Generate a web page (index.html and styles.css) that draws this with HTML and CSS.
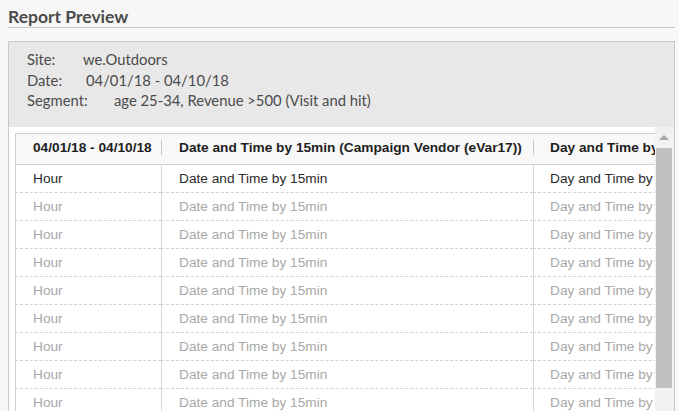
FILE: index.html
```html
<!DOCTYPE html>
<html>
<head>
<meta charset="utf-8">
<link rel="stylesheet" href="styles.css">
</head>
<body>
<div class="page">
  <h1 class="title">Report Preview</h1>
  <div class="box">
    <div class="info">
      <div class="info-row"><span class="lbl lbl-site">Site:</span><span>we.Outdoors</span></div>
      <div class="info-row"><span class="lbl lbl-date">Date:</span><span>04/01/18 - 04/10/18</span></div>
      <div class="info-row"><span class="lbl lbl-seg">Segment:</span><span>age 25-34, Revenue &gt;500 (Visit and hit)</span></div>
    </div>
    <div class="preview">
      <div class="viewport">
        <table class="grid">
          <thead>
            <tr>
              <th class="c1">04/01/18 - 04/10/18</th>
              <th class="c2">Date and Time by 15min (Campaign Vendor (eVar17))</th>
              <th class="c3">Day and Time by 15min</th>
            </tr>
          </thead>
          <tbody>
            <tr class="first"><td class="c1">Hour</td><td class="c2">Date and Time by 15min</td><td class="c3">Day and Time by 15min</td></tr>
            <tr><td class="c1">Hour</td><td class="c2">Date and Time by 15min</td><td class="c3">Day and Time by 15min</td></tr>
            <tr><td class="c1">Hour</td><td class="c2">Date and Time by 15min</td><td class="c3">Day and Time by 15min</td></tr>
            <tr><td class="c1">Hour</td><td class="c2">Date and Time by 15min</td><td class="c3">Day and Time by 15min</td></tr>
            <tr><td class="c1">Hour</td><td class="c2">Date and Time by 15min</td><td class="c3">Day and Time by 15min</td></tr>
            <tr><td class="c1">Hour</td><td class="c2">Date and Time by 15min</td><td class="c3">Day and Time by 15min</td></tr>
            <tr><td class="c1">Hour</td><td class="c2">Date and Time by 15min</td><td class="c3">Day and Time by 15min</td></tr>
            <tr><td class="c1">Hour</td><td class="c2">Date and Time by 15min</td><td class="c3">Day and Time by 15min</td></tr>
            <tr><td class="c1">Hour</td><td class="c2">Date and Time by 15min</td><td class="c3">Day and Time by 15min</td></tr>
            <tr><td class="c1">Hour</td><td class="c2">Date and Time by 15min</td><td class="c3">Day and Time by 15min</td></tr>
          </tbody>
        </table>
      </div>
      <div class="scrollbar">
        <div class="sb-arrow"><span class="tri"></span></div>
        <div class="sb-thumb"></div>
      </div>
    </div>
  </div>
</div>
</body>
</html>
```
FILE: styles.css
```css
html, body {
  margin: 0;
  padding: 0;
}
body {
  background: #f7f7f7;
  width: 679px;
  height: 411px;
  overflow: hidden;
}
.page {
  padding: 7px 4px 0 8px;
  height: 411px;
  box-sizing: border-box;
  display: flex;
  flex-direction: column;
}
.title {
  margin: 0;
  font-family: "Lato", "Open Sans", sans-serif;
  font-weight: 700;
  font-size: 17.5px;
  line-height: 19px;
  color: #4b4b4b;
  padding-bottom: 1px;
  border-bottom: 1px solid #c8c8c8;
}
.box {
  margin-top: 13px;
  border: 1px solid #c9c9c9;
  border-bottom: none;
  background: #e8e8e8;
  flex: 1;
  display: flex;
  flex-direction: column;
  min-height: 0;
}
.info {
  padding: 7px 0 16.5px 18px;
  font-family: "Lato", "Open Sans", sans-serif;
  font-size: 14.8px;
  line-height: 20.5px;
  color: #4b4b4b;
}
.lbl {
  display: inline-block;
}
.lbl-site { width: 56px; }
.lbl-date { width: 59px; }
.lbl-seg { width: 87px; }
.preview {
  flex: 1;
  display: flex;
  min-height: 0;
  background: #ffffff;
}
.viewport {
  flex: 1;
  min-width: 0;
  overflow: hidden;
  padding: 6px 0 0 6px;
}
.grid {
  border-collapse: separate;
  border-spacing: 0;
  table-layout: fixed;
  width: 778px;
  font-family: "Liberation Sans", Arial, sans-serif;
  font-size: 13.7px;
}
.grid th, .grid td {
  box-sizing: border-box;
  white-space: nowrap;
  overflow: hidden;
  text-align: left;
  vertical-align: middle;
}
.grid .c1 { width: 146px; padding-left: 17px; }
.grid .c2 { width: 372px; padding-left: 17px; }
.grid .c3 { width: 260px; padding-left: 16px; }
.grid th {
  height: 32px;
  padding-bottom: 4px;
  background: #f8f8f8;
  border-top: 1px solid #d0d0d0;
  border-bottom: 1px solid #d0d0d0;
  font-weight: 700;
  color: #1e1e1e;
}
.grid th.c1 { border-left: 1px solid #d0d0d0; }
.grid th.c2, .grid th.c3 {
  border-left: 1px solid transparent;
  background: linear-gradient(#c8c8c8, #c8c8c8) no-repeat 0 7px / 1px 15px, #f8f8f8;
  background-origin: border-box;
}
.grid td {
  height: 28px;
  padding-top: 0;
  padding-bottom: 0;
  border-bottom: 1px dashed #d2d2d2;
  border-left: 1px solid #d6d6d6;
  color: #a8a8a8;
}
.grid td.c1 { border-left-color: #d0d0d0; }
.grid tr.first td { color: #2b2b2b; }
.scrollbar {
  width: 19px;
  background: #f1f1f1;
  display: flex;
  flex-direction: column;
}
.sb-arrow {
  height: 21px;
  display: flex;
  align-items: center;
  justify-content: center;
}
.tri {
  width: 0;
  height: 0;
  border-left: 5px solid transparent;
  border-right: 5px solid transparent;
  border-bottom: 5px solid #a6a6a6;
  margin-left: -1px;
}
.sb-thumb {
  height: 240px;
  margin: 0 2px 0 1px;
  background: #c1c1c1;
}
```
